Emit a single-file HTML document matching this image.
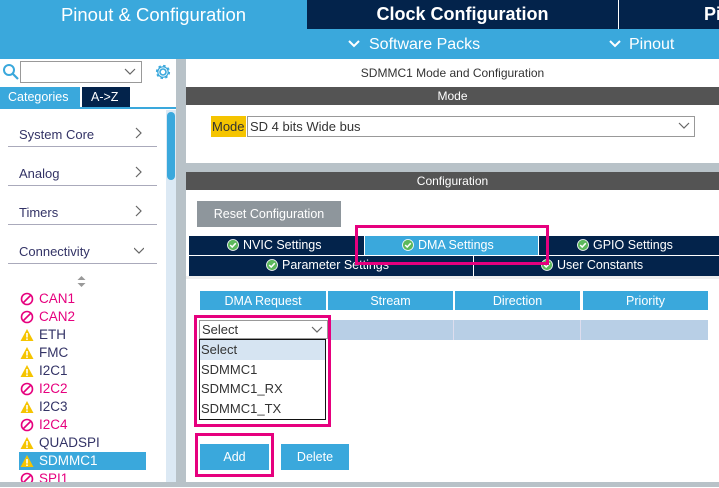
<!DOCTYPE html>
<html><head><style>
*{margin:0;padding:0;box-sizing:border-box}
body{width:719px;height:487px;overflow:hidden;position:relative;background:#fff;font-family:"Liberation Sans",sans-serif;}
.a{position:absolute}
.t{white-space:nowrap}
.it{height:18px;display:flex;align-items:center}
.it svg{margin-right:5px}
.ck{display:inline-block;vertical-align:-2px;margin-right:4px}
</style></head><body>
<svg width="0" height="0" style="position:absolute"><defs>
<symbol id="ban" viewBox="0 0 14 14"><circle cx="7" cy="7" r="5.5" stroke="#e6007e" stroke-width="1.6" fill="none"/><path d="M3 11 L11 3" stroke="#e6007e" stroke-width="1.6"/></symbol>
<symbol id="warn" viewBox="0 0 14 14"><path d="M7 1 L13.5 13 L0.5 13Z" fill="#f5c400"/><path d="M7 5 L7 9.5" stroke="#fff" stroke-width="1.6"/><circle cx="7" cy="11.2" r="0.9" fill="#fff"/></symbol>
<symbol id="ok" viewBox="0 0 12 12"><circle cx="6" cy="6" r="5.5" fill="#5cb85c" stroke="#fff" stroke-width="0.8"/><path d="M3.2 6 L5.2 8 L8.8 4.2" stroke="#fff" stroke-width="1.5" fill="none"/></symbol>
</defs></svg>
<!-- top bars -->
<div class="a" style="left:0;top:0;width:719px;height:59px;background:#3aa8dc"></div>
<div class="a" style="left:307px;top:0;width:412px;height:29px;background:#03234b"></div>
<div class="a" style="left:618px;top:0;width:1px;height:29px;background:#fff"></div>
<div class="a t" style="left:0;top:4px;width:307px;text-align:center;color:#fff;font-size:18.5px">Pinout &amp; Configuration</div>
<div class="a t" style="left:307px;top:4px;width:311px;text-align:center;color:#fff;font-size:18px;font-weight:bold">Clock Configuration</div>
<div class="a t" style="left:704px;top:4px;color:#fff;font-size:18px;font-weight:bold">Pi</div>
<svg class="a" style="left:347px;top:39px" width="14" height="10"><path d="M2 2 L7 7 L12 2" stroke="#fff" stroke-width="2" fill="none"/></svg>
<div class="a t" style="left:369px;top:36px;color:#fff;font-size:16px">Software Packs</div>
<svg class="a" style="left:608px;top:39px" width="14" height="10"><path d="M2 2 L7 7 L12 2" stroke="#fff" stroke-width="2" fill="none"/></svg>
<div class="a t" style="left:629px;top:36px;color:#fff;font-size:16px">Pinout</div>

<!-- left panel -->
<svg class="a" style="left:2px;top:63px" width="18" height="18"><circle cx="7" cy="7" r="5" stroke="#3aa8dc" stroke-width="2" fill="none"/><path d="M11 11 L16 16" stroke="#3aa8dc" stroke-width="2.2"/></svg>
<div class="a" style="left:20px;top:61px;width:122px;height:22px;border:1px solid #999;background:#fff"></div>
<svg class="a" style="left:124px;top:68px" width="12" height="8"><path d="M1 1 L6 6 L11 1" stroke="#666" stroke-width="1.2" fill="none"/></svg>
<svg class="a" style="left:154px;top:63px" width="18" height="18"><circle cx="9" cy="9" r="3" stroke="#3aa8dc" stroke-width="1.6" fill="none"/><circle cx="9" cy="9" r="6" stroke="#3aa8dc" stroke-width="2.2" fill="none" stroke-dasharray="2.4 2.3"/><circle cx="9" cy="9" r="5.2" stroke="#3aa8dc" stroke-width="1.2" fill="none"/></svg>
<div class="a t" style="left:0;top:87px;width:80px;height:21px;background:#3aa8dc;color:#fff;font-size:12.5px;padding:3px 0 0 8px">Categories</div>
<div class="a t" style="left:82px;top:87px;width:48px;height:21px;background:#03234b;color:#fff;font-size:12.5px;padding:3px 0 0 9px">A-&gt;Z</div>
<div class="a" style="left:0;top:107px;width:176px;height:2px;background:#3aa8dc"></div>
<div class="a" style="left:166px;top:110px;width:10px;height:372px;background:#dce9f4"></div>
<div class="a" style="left:167px;top:112px;width:8px;height:68px;background:#3aa8dc;border-radius:4px"></div>
<div class="a" style="left:176px;top:59px;width:10px;height:428px;background:#b8c2c8"></div>

<div class="a t" style="left:19px;top:127px;font-size:13px;color:#333366">System Core</div>
<div class="a t" style="left:19px;top:166px;font-size:13px;color:#333366">Analog</div>
<div class="a t" style="left:19px;top:205px;font-size:13px;color:#333366">Timers</div>
<div class="a t" style="left:19px;top:244px;font-size:13px;color:#333366">Connectivity</div>
<svg class="a" style="left:134px;top:127px" width="10" height="140"><path d="M2 1 L7 6 L2 11 M2 40 L7 45 L2 50 M2 79 L7 84 L2 89" stroke="#666" stroke-width="1.2" fill="none"/><path d="M0 121 L5 126 L10 121" stroke="#666" stroke-width="1.2" fill="none"/></svg>
<div class="a" style="left:8px;top:146px;width:149px;height:1px;background:#aab"></div>
<div class="a" style="left:8px;top:185px;width:149px;height:1px;background:#aab"></div>
<div class="a" style="left:8px;top:224px;width:149px;height:1px;background:#aab"></div>
<div class="a" style="left:8px;top:263px;width:149px;height:1px;background:#aab"></div>
<svg class="a" style="left:77px;top:276px" width="9" height="11"><path d="M0.5 4 L4.5 0 L8.5 4Z M0.5 7 L4.5 11 L8.5 7Z" fill="#999"/></svg>

<div class="a" style="left:19px;top:452px;width:127px;height:18px;background:#3aa8dc"></div>
<div class="a" style="left:20px;top:290px;font-size:13.5px;line-height:18px">
<div class="it" style="color:#e6007e"><svg width="14" height="14"><use href="#ban"/></svg>CAN1</div>
<div class="it" style="color:#e6007e"><svg width="14" height="14"><use href="#ban"/></svg>CAN2</div>
<div class="it" style="color:#333366"><svg width="14" height="14"><use href="#warn"/></svg>ETH</div>
<div class="it" style="color:#333366"><svg width="14" height="14"><use href="#warn"/></svg>FMC</div>
<div class="it" style="color:#333366"><svg width="14" height="14"><use href="#warn"/></svg>I2C1</div>
<div class="it" style="color:#e6007e"><svg width="14" height="14"><use href="#ban"/></svg>I2C2</div>
<div class="it" style="color:#333366"><svg width="14" height="14"><use href="#warn"/></svg>I2C3</div>
<div class="it" style="color:#e6007e"><svg width="14" height="14"><use href="#ban"/></svg>I2C4</div>
<div class="it" style="color:#333366"><svg width="14" height="14"><use href="#warn"/></svg>QUADSPI</div>
<div class="it" style="color:#fff"><svg width="14" height="14"><use href="#warn"/></svg>SDMMC1</div>
<div class="it" style="color:#e6007e"><svg width="14" height="14"><use href="#ban"/></svg>SPI1</div>
</div>
<div class="a" style="left:0;top:482px;width:719px;height:5px;background:#b8c2c8"></div>

<!-- right -->
<div class="a t" style="left:186px;top:66px;width:533px;text-align:center;font-size:12px;color:#333">SDMMC1 Mode and Configuration</div>
<div class="a t" style="left:186px;top:87px;width:533px;height:18px;background:#545454;color:#fff;font-size:12px;text-align:center;line-height:19px">Mode</div>
<div class="a t" style="left:211px;top:116px;width:35px;height:21px;background:#f5c400;font-size:13px;line-height:21px;padding-left:1px;color:#333">Mode</div>
<div class="a t" style="left:247px;top:116px;width:448px;height:21px;border:1px solid #999;font-size:13px;line-height:19px;padding-left:2px;color:#333">SD 4 bits Wide bus</div>
<svg class="a" style="left:678px;top:122px" width="12" height="8"><path d="M1 1 L6 6 L11 1" stroke="#666" stroke-width="1.2" fill="none"/></svg>
<div class="a" style="left:186px;top:163px;width:533px;height:9px;background:#b8c2c8"></div>
<div class="a t" style="left:186px;top:172px;width:533px;height:18px;background:#545454;color:#fff;font-size:12px;text-align:center;line-height:19px">Configuration</div>
<div class="a t" style="left:197px;top:201px;width:144px;height:26px;background:#8e969c;color:#fff;font-size:12.5px;text-align:center;line-height:26px">Reset Configuration</div>

<div class="a" style="left:189px;top:236px;width:530px;height:40px;background:#03234b"></div>
<div class="a" style="left:365px;top:236px;width:173px;height:19px;background:#3aa8dc"></div>
<div class="a" style="left:364px;top:236px;width:1px;height:19px;background:#fff"></div>
<div class="a" style="left:538px;top:236px;width:1px;height:19px;background:#fff"></div>
<div class="a" style="left:189px;top:255px;width:530px;height:1px;background:#fff"></div>
<div class="a" style="left:473px;top:256px;width:1px;height:20px;background:#fff"></div>
<div class="a" style="left:186px;top:276px;width:533px;height:3px;background:#eee"></div>
<div class="a t" style="left:227px;top:238px;color:#fff;font-size:12.5px"><svg class="ck" width="12" height="12"><use href="#ok"/></svg>NVIC Settings</div>
<div class="a t" style="left:402px;top:238px;color:#fff;font-size:12.5px"><svg class="ck" width="12" height="12"><use href="#ok"/></svg>DMA Settings</div>
<div class="a t" style="left:577px;top:238px;color:#fff;font-size:12.5px"><svg class="ck" width="12" height="12"><use href="#ok"/></svg>GPIO Settings</div>
<div class="a t" style="left:266px;top:258px;color:#fff;font-size:12.5px"><svg class="ck" width="12" height="12"><use href="#ok"/></svg>Parameter Settings</div>
<div class="a t" style="left:541px;top:258px;color:#fff;font-size:12.5px"><svg class="ck" width="12" height="12"><use href="#ok"/></svg>User Constants</div>
<div class="a" style="left:355px;top:225px;width:194px;height:40px;border:3px solid #e6007e"></div>

<div class="a" style="left:200px;top:291px;font-size:12.5px;color:#fff;line-height:20px">
<div class="a t" style="left:0;width:126px;height:19px;background:#3aa8dc;text-align:center">DMA Request</div>
<div class="a t" style="left:128px;width:125px;height:19px;background:#3aa8dc;text-align:center">Stream</div>
<div class="a t" style="left:255px;width:125px;height:19px;background:#3aa8dc;text-align:center">Direction</div>
<div class="a t" style="left:383px;width:125px;height:19px;background:#3aa8dc;text-align:center">Priority</div>
</div>
<div class="a" style="left:328px;top:320px;width:380px;height:20px;background:#b8cfe6"></div>
<div class="a" style="left:453px;top:320px;width:1px;height:20px;background:#dde"></div>
<div class="a" style="left:580px;top:320px;width:1px;height:20px;background:#dde"></div>
<div class="a t" style="left:199px;top:320px;width:129px;height:19px;border:1px solid #999;background:#fff;font-size:13px;line-height:17px;padding-left:2px;color:#333">Select</div>
<svg class="a" style="left:311px;top:326px" width="12" height="8"><path d="M1 1 L6 6 L11 1" stroke="#666" stroke-width="1.2" fill="none"/></svg>
<div class="a" style="left:199px;top:339px;width:127px;height:81px;border:1px solid #111;background:#fff;font-size:13px;line-height:19.5px;color:#333">
<div style="background:#d6e4f2;padding-left:1px">Select</div>
<div style="padding-left:1px">SDMMC1</div>
<div style="padding-left:1px">SDMMC1_RX</div>
<div style="padding-left:1px">SDMMC1_TX</div>
</div>
<div class="a" style="left:194px;top:315px;width:137px;height:112px;border:3px solid #e6007e"></div>
<div class="a t" style="left:200px;top:444px;width:69px;height:26px;background:#3aa8dc;color:#fff;font-size:12.5px;text-align:center;line-height:27px">Add</div>
<div class="a t" style="left:281px;top:444px;width:68px;height:26px;background:#3aa8dc;color:#fff;font-size:12.5px;text-align:center;line-height:27px">Delete</div>
<div class="a" style="left:195px;top:433px;width:79px;height:44px;border:3px solid #e6007e"></div>
</body></html>
